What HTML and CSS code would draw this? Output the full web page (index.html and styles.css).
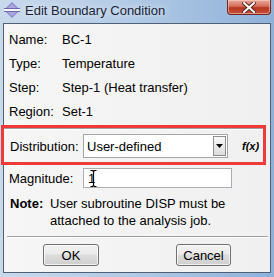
FILE: index.html
```html
<!DOCTYPE html>
<html>
<head>
  <title>Edit Boundary Condition</title>
  <link rel="stylesheet" href="styles.css">
</head>
<body>
  <div class="window">
    <!-- Title bar -->
    <div class="titlebar">
      <svg class="app-icon" width="18" height="16" viewBox="0 0 18 16">
        <polygon points="9,0 17,8 9,16 1,8" fill="#8a86c8"/>
        <polygon points="9,1.5 15.5,8 9,14.5 2.5,8" fill="#a9a6dc"/>
        <rect x="1" y="6.5" width="16" height="3" fill="#f4f4fa"/>
        <line x1="1" y1="6.5" x2="17" y2="6.5" stroke="#6d69a8" stroke-width="1"/>
        <line x1="1" y1="9.5" x2="17" y2="9.5" stroke="#6d69a8" stroke-width="1"/>
      </svg>
      <span class="title">Edit Boundary Condition</span>
      <div class="close-btn">
        <svg width="14" height="11" viewBox="0 0 14 11">
          <path d="M2 1 L12 10 M12 1 L2 10" stroke="#5a2a22" stroke-width="4" stroke-linecap="square"/>
          <path d="M2 1 L12 10 M12 1 L2 10" stroke="#ffffff" stroke-width="2" stroke-linecap="square"/>
        </svg>
      </div>
    </div>

    <!-- Client area -->
    <div class="client">
      <div class="info">
        <div class="row"><span class="label">Name:</span><span>BC-1</span></div>
        <div class="row"><span class="label">Type:</span><span>Temperature</span></div>
        <div class="row"><span class="label">Step:</span><span>Step-1 (Heat transfer)</span></div>
        <div class="row"><span class="label">Region:</span><span>Set-1</span></div>
      </div>

      <div class="highlight">
        <div class="sep"></div>
        <div class="field-row">
          <span class="field-label">Distribution:</span>
          <div class="combo">
            <span class="combo-text">User-defined</span>
            <span class="combo-btn">
              <svg width="7" height="4" viewBox="0 0 7 4"><polygon points="0,0 7,0 3.5,4" fill="#000"/></svg>
            </span>
          </div>
          <span class="fx">f(x)</span>
        </div>
      </div>

      <div class="field-row magnitude">
        <span class="field-label">Magnitude:</span>
        <div class="text-input">
          <span>1</span>
          <svg class="ibeam" width="7" height="17" viewBox="0 0 7 17">
            <path d="M0.5 0.5 H2.5 L3.5 1.5 L4.5 0.5 H6.5 M3.5 1.5 V15.5 M0.5 16.5 H2.5 L3.5 15.5 L4.5 16.5 H6.5" stroke="#000" stroke-width="1.2" fill="none"/>
          </svg>
        </div>
      </div>

      <div class="note">
        <span class="note-label">Note:</span>
        <span class="note-text">User subroutine DISP must be attached to the analysis job.</span>
      </div>

      <div class="sep bottom-sep"></div>

      <div class="buttons">
        <button class="btn ok">OK</button>
        <button class="btn cancel">Cancel</button>
      </div>
    </div>
  </div>
</body>
</html>
```

FILE: styles.css
```css
body {
  margin: 0;
  font-family: "Liberation Sans", Arial, sans-serif;
  font-size: 13px;
  color: #000;
}

.window {
  width: 274px;
  height: 277px;
  box-sizing: border-box;
  background: linear-gradient(90deg, #c9d9ec 0%, #b3cbe6 45%, #8fb1d8 100%);
  display: flex;
  flex-direction: column;
  overflow: hidden;
}

.titlebar {
  height: 23px;
  display: flex;
  align-items: flex-start;
  position: relative;
}

.app-icon {
  margin: 2px 0 0 3px;
  flex: 0 0 auto;
}

.title {
  margin: 3px 0 0 4px;
  font-size: 13px;
  color: #1b2434;
  text-shadow: 0 0 6px rgba(255, 255, 255, 0.9);
}

.close-btn {
  margin-left: auto;
  margin-right: 3px;
  width: 44px;
  height: 15px;
  box-sizing: border-box;
  border: 1px solid #6e2a22;
  border-top: none;
  border-radius: 0 0 4px 4px;
  background: linear-gradient(180deg, #e9a99b 0%, #d36d5a 45%, #b8361f 55%, #c8503a 100%);
  box-shadow: inset 0 0 0 1px rgba(255, 220, 210, 0.5);
  display: flex;
  align-items: center;
  justify-content: center;
}

.client {
  flex: 1;
  margin: 0 3px 4px 3px;
  border: 1px solid #4e5f76;
  background: linear-gradient(90deg, #f6f6f6, #f0f0f0);
  display: flex;
  flex-direction: column;
}

.info {
  padding: 4px 0 0 5px;
}

.row {
  height: 24px;
  line-height: 24px;
  display: flex;
  white-space: nowrap;
}

.label {
  width: 53px;
  flex: 0 0 53px;
}

.highlight {
  margin: 1px 0 0 -3px;
  width: 265px;
  box-sizing: border-box;
  border: 3px solid #f03a3a;
  height: 40px;
}

.sep {
  height: 1px;
  background: #a0a0a0;
  border-bottom: 1px solid #ffffff;
}

.highlight .sep {
  margin: 0 0 0 0;
}

.field-row {
  display: flex;
  align-items: center;
  padding-left: 6px;
}

.highlight .field-row {
  margin-top: 4px;
}

.field-label {
  width: 73px;
  flex: 0 0 73px;
}

.combo {
  width: 145px;
  height: 24px;
  box-sizing: border-box;
  border: 1px solid #a6a6a6;
  background: #fff;
  display: flex;
  align-items: center;
}

.combo-text {
  flex: 1;
  padding-left: 3px;
}

.combo-btn {
  width: 13px;
  height: 20px;
  margin-right: 1px;
  box-sizing: border-box;
  border: 1px solid #8e8f8f;
  background: linear-gradient(180deg, #f8f8f8, #dcdcdc);
  display: flex;
  align-items: center;
  justify-content: center;
}

.fx {
  margin-left: 14px;
  font-size: 11px;
  font-weight: bold;
  font-style: italic;
}

.magnitude {
  margin-top: 3px;
  padding-left: 5px;
}

.magnitude .field-label {
  width: 74px;
  flex: 0 0 74px;
}

.text-input {
  width: 149px;
  height: 20px;
  box-sizing: border-box;
  border: 1px solid #abadb3;
  background: #fff;
  display: flex;
  align-items: center;
  padding-left: 4px;
  position: relative;
}

.ibeam {
  position: absolute;
  left: 6px;
  top: 1px;
}

.note {
  display: flex;
  padding: 7px 0 0 6px;
  line-height: 17px;
}

.note-label {
  font-weight: bold;
  width: 40px;
  flex: 0 0 40px;
}

.note-text {
  width: 190px;
}

.bottom-sep {
  margin: 7px 2px 0 3px;
}

.buttons {
  display: flex;
  padding: 6px 0 0 39px;
  gap: 77px;
}

.btn {
  height: 22px;
  box-sizing: border-box;
  border: 1px solid #707070;
  border-radius: 3px;
  background: linear-gradient(180deg, #f2f2f2 0%, #ebebeb 45%, #dddddd 50%, #cfcfcf 100%);
  box-shadow: inset 0 0 0 1px rgba(255, 255, 255, 0.7);
  font-family: "Liberation Sans", Arial, sans-serif;
  font-size: 13px;
  color: #000;
  padding: 0;
}

.ok {
  width: 56px;
}

.cancel {
  width: 55px;
}
```
